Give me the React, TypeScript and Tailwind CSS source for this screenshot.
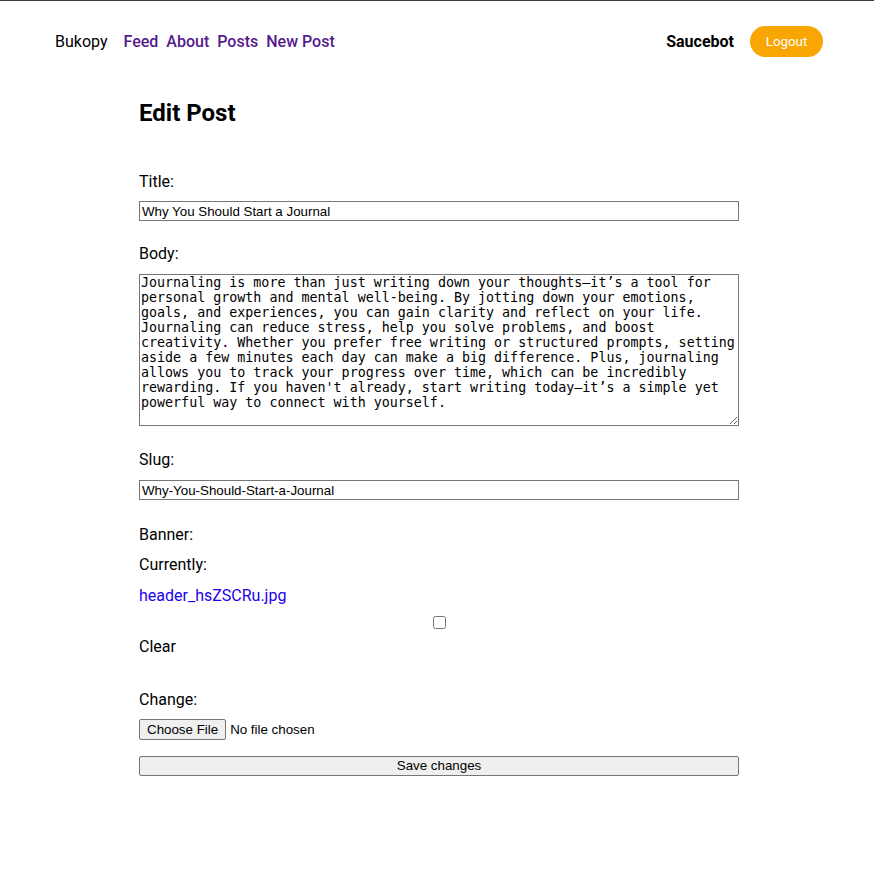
export default function App() {
  const body =
    "Journaling is more than just writing down your thoughts\u2014it\u2019s a tool for personal growth and mental well-being. By jotting down your emotions, goals, and experiences, you can gain clarity and reflect on your life. Journaling can reduce stress, help you solve problems, and boost creativity. Whether you prefer free writing or structured prompts, setting aside a few minutes each day can make a big difference. Plus, journaling allows you to track your progress over time, which can be incredibly rewarding. If you haven't already, start writing today\u2014it\u2019s a simple yet powerful way to connect with yourself.";

  const field =
    "block h-[20px] w-full border border-[#767676] px-[2px] font-['Liberation_Sans',Arial,sans-serif] text-[13.33px] leading-[16px] text-black";

  return (
    <div className="min-h-screen border-t border-[#353f3c] bg-white font-['Roboto',sans-serif] text-[16px] text-black">
      <nav className="flex items-center justify-between pl-[55px] pr-[51px] pt-[25px]">
        <div className="flex items-center">
          <span className="mr-[16px]">Bukopy</span>
          <div className="flex items-center gap-[8px] font-medium text-[#551a8b]">
            <a href="#">Feed</a>
            <a href="#">About</a>
            <a href="#">Posts</a>
            <a href="#">New Post</a>
          </div>
        </div>
        <div className="flex items-center gap-[16px]">
          <span className="font-bold">Saucebot</span>
          <button className="h-[31px] w-[73px] rounded-full bg-[#f9a603] text-[13.33px] text-white">
            Logout
          </button>
        </div>
      </nav>

      <main className="ml-[139px] w-[600px]">
        <h1 className="mt-[42px] text-[24px] font-bold leading-[28px]">Edit Post</h1>

        <form className="mt-[43px] flex flex-col">
          <label className="leading-[24px]">Title:</label>
          <input className={`mt-[7px] ${field}`} defaultValue="Why You Should Start a Journal" />

          <label className="mt-[21px] leading-[24px]">Body:</label>
          <textarea
            className="mt-[8px] block h-[152px] w-full resize-y border border-[#767676] px-[1px] py-[0px] font-['DejaVu_Sans_Mono',monospace] text-[13.33px] leading-[15px] text-black"
            defaultValue={body}
          />

          <label className="mt-[22px] leading-[24px]">Slug:</label>
          <input className={`mt-[8px] ${field}`} defaultValue="Why-You-Should-Start-a-Journal" />

          <label className="mt-[23px] leading-[24px]">Banner:</label>
          <span className="mt-[6px] leading-[24px]">Currently:</span>
          <a href="#" className="mt-[7px] self-start leading-[24px] text-[#2200ee]">
            header_hsZSCRu.jpg
          </a>
          <input type="checkbox" className="mx-auto mt-[8px] h-[13px] w-[13px]" />
          <span className="mt-[6px] leading-[24px]">Clear</span>

          <span className="mt-[29px] leading-[24px]">Change:</span>
          <input
            type="file"
            className="mt-[7px] block h-[21px] font-['Liberation_Sans',Arial,sans-serif] text-[13.33px] file:mr-[4px] file:h-[21px] file:rounded-[2px] file:border file:border-[#767676] file:bg-[#efefef] file:px-[7px] file:text-[13.33px]"
          />
          <button
            type="button"
            className="mt-[16px] h-[20px] w-full rounded-[2px] border border-[#767676] bg-[#efefef] font-['Liberation_Sans',Arial,sans-serif] text-[13.33px] leading-[16px]"
          >
            Save changes
          </button>
        </form>
      </main>
    </div>
  );
}
